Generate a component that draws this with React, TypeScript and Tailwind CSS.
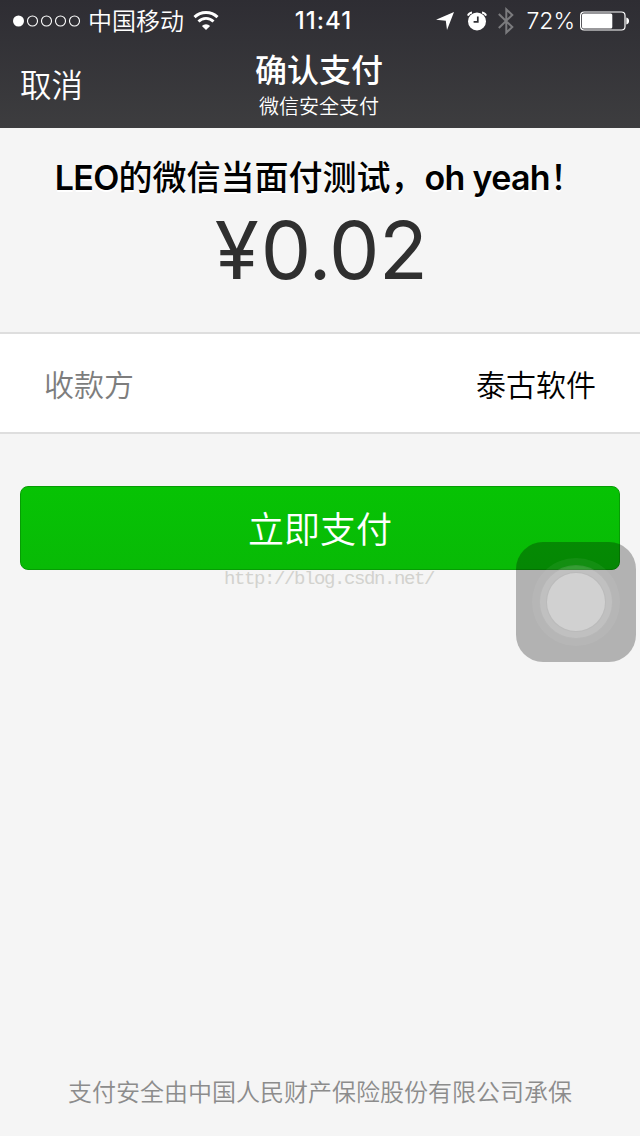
function SignalDots() {
    return (
        <svg width="68" height="12" viewBox="0 0 68 12" fill="none" stroke="white" strokeWidth="1.1">
            <circle cx="5.5" cy="6" r="5.5" fill="white" stroke="none" />
            <circle cx="19.5" cy="6" r="5" />
            <circle cx="33.5" cy="6" r="5" />
            <circle cx="47.5" cy="6" r="5" />
            <circle cx="61.5" cy="6" r="5" />
        </svg>
    );
}

function WifiIcon() {
    return (
        <svg width="26" height="20" viewBox="0 0 26 20" fill="none" stroke="white">
            <path d="M1.5 6.2 A16.5 16.5 0 0 1 24.5 6.2" strokeWidth="3" />
            <path d="M5.5 10.6 A10.5 10.5 0 0 1 20.5 10.6" strokeWidth="2.8" />
            <path d="M13 19 L8.9 14.9 A5.8 5.8 0 0 1 17.1 14.9 Z" fill="white" stroke="none" />
        </svg>
    );
}

function LocationIcon() {
    return (
        <svg width="18" height="18" viewBox="0 0 18 18" fill="white">
            <path d="M18 0 L11 18 L9.8 8.8 L0 7.8 Z" />
        </svg>
    );
}

function AlarmIcon() {
    return (
        <svg width="20" height="20" viewBox="0 0 20 20" fill="none">
            <circle cx="10" cy="10.4" r="9" fill="white" />
            <path d="M0.9 4.6 A5 5 0 0 1 5 1.4 M15 1.4 A5 5 0 0 1 19.1 4.6" stroke="white" strokeWidth="2" />
            <path d="M10.8 5.4 V10.8 H6.6" stroke="#303035" strokeWidth="1.7" />
        </svg>
    );
}

function BluetoothIcon() {
    return (
        <svg width="16" height="28" viewBox="0 0 16 28" fill="none" stroke="#7b7b7e" strokeWidth="2">
            <path d="M0.8 7 L14.3 20 L8.3 25.6 V2.4 L14.3 8 L0.8 21" />
        </svg>
    );
}

function BatteryIcon() {
    return (
        <svg width="50" height="20" viewBox="0 0 50 20" fill="none">
            <rect x="0.6" y="1" width="44.4" height="18" rx="3.5" stroke="white" strokeWidth="1.2" />
            <rect x="2" y="2.5" width="30.3" height="15" rx="1.5" fill="white" />
            <path d="M46.3 6.5 C50 7 50 13 46.3 13.5 Z" fill="white" />
        </svg>
    );
}

function StatusBar() {
    return (
        <div className="grid h-10 grid-cols-[1fr_auto_1fr] items-center pt-px text-[24px] leading-8">
            <div className="flex items-center pl-[13px]">
                <SignalDots />
                <span className="ml-[7px] pt-[2px] font-[350]">中国移动</span>
                <span className="ml-[9px]"><WifiIcon /></span>
            </div>
            <span className="pl-[7px] text-[24px] font-medium tracking-[1px]">11:41</span>
            <div className="flex items-center justify-end pr-[10px]">
                <LocationIcon />
                <span className="ml-[13px]"><AlarmIcon /></span>
                <span className="ml-[11px]"><BluetoothIcon /></span>
                <span className="ml-[12px] mr-[5px] text-[23px] font-[350]">72%</span>
                <BatteryIcon />
            </div>
        </div>
    );
}

function Header() {
    return (
        <header className="h-32 bg-linear-to-b from-[#2e2d33] to-[#3d3d3f] text-white">
            <StatusBar />
            <div className="grid h-[88px] grid-cols-[1fr_auto_1fr] items-start">
                <button className="pl-[20px] pt-[26px] text-left text-[31.5px] leading-10 font-[350]">取消</button>
                <div className="flex flex-col items-center pt-[11px] pr-[2px]">
                    <h1 className="text-[32px] leading-10 font-medium">确认支付</h1>
                    <span className="text-[20px] leading-8 font-[350]">微信安全支付</span>
                </div>
                <span />
            </div>
        </header>
    );
}

// floating iOS home button, sits over the page
function AssistiveTouch() {
    return (
        <div className="absolute left-[516px] top-[542px] flex size-[120px] items-center justify-center rounded-[27px] bg-black/27">
            <div className="flex size-[88px] items-center justify-center rounded-full bg-white/6">
                <div className="flex size-[74px] items-center justify-center rounded-full border border-black/5 bg-white/15">
                    <div className="size-[60px] rounded-full border border-black/10 bg-[#d1d1d1]" />
                </div>
            </div>
        </div>
    );
}

function App() {
    return (
        <div className="relative flex h-[1136px] w-[640px] flex-col overflow-hidden bg-[#f5f5f5] font-['Inter','Noto_Sans_CJK_SC',sans-serif]">
            <Header />

            <section className="flex h-[204px] flex-col items-center pt-[30px]">
                <h2 className="whitespace-nowrap pr-[2px] text-[34px] leading-10 font-semibold tracking-[-0.7px] text-black [text-shadow:0_2px_0_white]">
                    LEO<span className="font-medium tracking-normal">的微信当面付测试，</span>oh yeah<span className="font-medium">！</span>
                </h2>
                <p className="mt-[7px] pl-[2px] text-[80px] leading-[90px] tracking-[-0.5px] text-[#2f2f2f]">
                    <span className="tracking-[2px]">¥</span>0.02
                </p>
            </section>

            <section className="flex h-[102px] items-center justify-between border-y-2 border-[#dedede] bg-white px-[44px] pt-[4px] text-[30px]">
                <span className="font-[350] text-[#7d7d7d]">收款方</span>
                <span className="font-[350] text-black">泰古软件</span>
            </section>

            <div className="px-5 pt-[52px]">
                <button className="h-[84px] w-full rounded-lg border border-[#079c05] bg-linear-to-b from-[#07c304] to-[#08ba06] pt-[3px] text-[36px] font-[350] text-white">
                    立即支付
                </button>
            </div>

            <p className="ml-[224px] font-['Liberation_Mono',monospace] text-[19px] leading-[18px] tracking-[-1.4px] text-[#d2d2ce]">
                http://blog.csdn.net/
            </p>

            <footer className="mt-auto pb-[23px] text-center text-[24px] leading-10 font-[350] text-[#8c8c8c]">
                支付安全由中国人民财产保险股份有限公司承保
            </footer>

            <AssistiveTouch />
        </div>
    );
}

export default App;
